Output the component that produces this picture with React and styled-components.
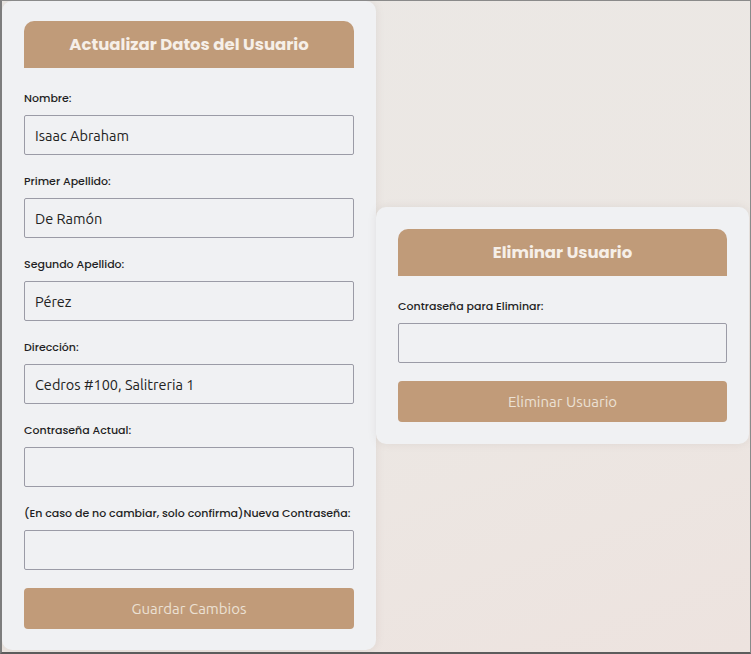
import React from "react"
import styled, {createGlobalStyle} from "styled-components"

const GlobalStyle = createGlobalStyle`
    html, body {
        margin: 0;
        padding: 0;
    }
    * {
        box-sizing: border-box;
    }
`

const headingFont = `"Poppins", "Inter", "DejaVu Sans", sans-serif`
const fieldFont = `"Ubuntu", "Noto Sans", "Open Sans", sans-serif`

const Frame = styled.div`
    width: 751px;
    height: 654px;
    padding-bottom: 2px;
    border-top: 1px solid #8a8a8a;
    border-left: 2px solid #7d7d7d;
    border-right: 1px solid #8a8a8a;
    border-bottom: 2px solid #5c5c5c;
    background: linear-gradient(160deg, #ebe8e5 0%, #ece7e3 60%, #ede3df 100%);
    display: flex;
    align-items: center;
    overflow: hidden;
`

const Card = styled.section`
    width: ${p => p.width}px;
    flex-shrink: 0;
    background: #f0f1f3;
    border-radius: 10px;
    padding: ${p => p.pad}px 22px ${p => p.padBottom}px;
    box-shadow: 0 0 8px rgba(120, 110, 100, 0.12);
    display: flex;
    flex-direction: column;
`

const Header = styled.h2`
    margin: 0 0 22px;
    height: 47px;
    background: #c09b79;
    border-radius: 10px 10px 0 0;
    display: flex;
    align-items: center;
    justify-content: center;
    font-family: ${headingFont};
    font-size: 16.5px;
    font-weight: 700;
    color: #f6efe8;
`

const Field = styled.div`
    display: flex;
    flex-direction: column;
    margin-bottom: 18px;
`

const Label = styled.label`
    font-family: ${headingFont};
    font-size: 11px;
    font-weight: 500;
    line-height: 16px;
    color: #1f1f24;
    margin-bottom: 9px;
    white-space: nowrap;
`

const Input = styled.input`
    height: 40px;
    width: 100%;
    border: 1.5px solid #9b9ba6;
    border-radius: 2px;
    background: #f0f1f3;
    padding: 0 10px;
    font-family: ${fieldFont};
    font-size: 14.5px;
    color: #222;
    outline: none;
`

const Button = styled.button`
    height: 41px;
    width: 100%;
    border: none;
    border-radius: 4px;
    background: #c19b79;
    color: #ece1d4;
    font-family: ${fieldFont};
    font-size: 15px;
    cursor: pointer;
`

const fields = [
    {label: "Nombre:", value: "Isaac Abraham"},
    {label: "Primer Apellido:", value: "De Ramón"},
    {label: "Segundo Apellido:", value: "Pérez"},
    {label: "Dirección:", value: "Cedros #100, Salitreria 1"},
    {label: "Contraseña Actual:", value: "", type: "password"},
    {label: "(En caso de no cambiar, solo confirma)Nueva Contraseña:", value: "", type: "password"}
]

export default function App() {
    return (
        <>
            <GlobalStyle />
            <Frame>
                <Card width={374} pad={20} padBottom={21}>
                    <Header>Actualizar Datos del Usuario</Header>
                    {fields.map(f => (
                        <Field key={f.label}>
                            <Label>{f.label}</Label>
                            <Input type={f.type || "text"} defaultValue={f.value} />
                        </Field>
                    ))}
                    <Button>Guardar Cambios</Button>
                </Card>
                <Card width={373} pad={22} padBottom={22}>
                    <Header>Eliminar Usuario</Header>
                    <Field>
                        <Label>Contraseña para Eliminar:</Label>
                        <Input type="password" />
                    </Field>
                    <Button>Eliminar Usuario</Button>
                </Card>
            </Frame>
        </>
    )
}
